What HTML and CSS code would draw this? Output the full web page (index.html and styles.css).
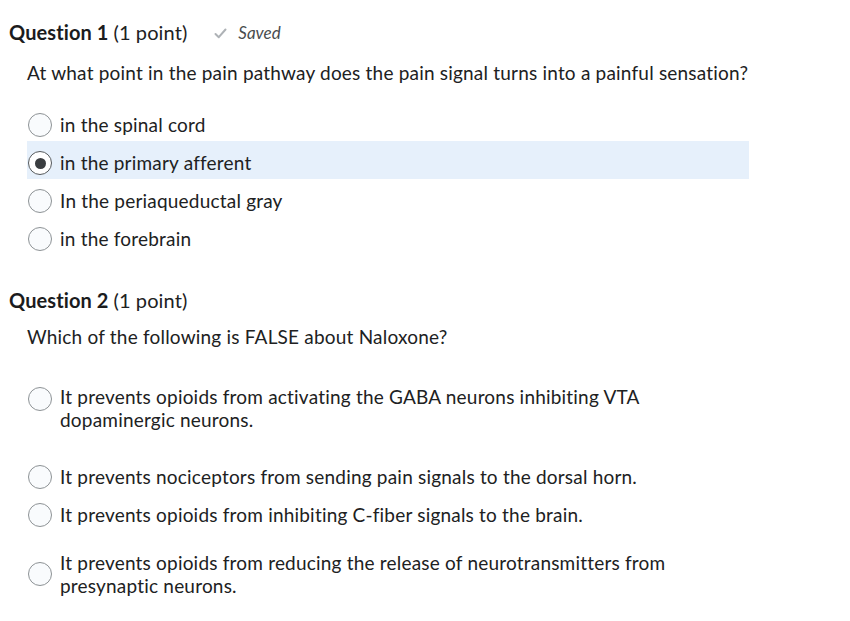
FILE: index.html
```html
<!DOCTYPE html>
<html lang="en">
<head>
    <meta charset="UTF-8">
    <meta name="viewport" content="width=device-width, initial-scale=1.0">
    <link rel="stylesheet" href="styles.css">
</head>
<body>

<div class="quiz">
    <div class="question">
        <div class="question-header">
            <h2 class="question-title">Question 1 <span class="points">(1 point)</span></h2>
            <div class="saved-status">
                <svg class="saved-icon" width="13" height="11" viewBox="0 0 13 11">
                    <path d="M1.5 6 L4.8 9.2 L11.5 1.5" fill="none" stroke="#aeb2b6" stroke-width="2" stroke-linecap="round" stroke-linejoin="round"/>
                </svg>
                <span>Saved</span>
            </div>
        </div>
        <p class="question-text">At what point in the pain pathway does the pain signal turns into a painful sensation?</p>
        <div class="options">
            <label class="option"><span class="radio"></span><span class="option-text">in the spinal cord</span></label>
            <label class="option selected"><span class="radio checked"></span><span class="option-text">in the primary afferent</span></label>
            <label class="option"><span class="radio"></span><span class="option-text">In the periaqueductal gray</span></label>
            <label class="option"><span class="radio"></span><span class="option-text">in the forebrain</span></label>
        </div>
    </div>

    <div class="question">
        <div class="question-header">
            <h2 class="question-title">Question 2 <span class="points">(1 point)</span></h2>
        </div>
        <p class="question-text question-text-tight">Which of the following is FALSE about Naloxone?</p>
        <div class="options options-spaced">
            <label class="option option-long option-spaced"><span class="radio"></span><span class="option-text">It prevents opioids from activating the GABA neurons inhibiting VTA<br>dopaminergic neurons.</span></label>
            <label class="option"><span class="radio"></span><span class="option-text">It prevents nociceptors from sending pain signals to the dorsal horn.</span></label>
            <label class="option"><span class="radio"></span><span class="option-text">It prevents opioids from inhibiting C-fiber signals to the brain.</span></label>
            <label class="option option-long option-centered"><span class="radio"></span><span class="option-text">It prevents opioids from reducing the release of neurotransmitters from<br>presynaptic neurons.</span></label>
        </div>
    </div>
</div>

</body>
</html>
```

FILE: styles.css
```css
body {
    margin: 0;
    background: #ffffff;
    color: #202122;
    font-family: Lato, "Noto Sans", sans-serif;
    font-size: 19px;
    line-height: 23px;
    letter-spacing: 0.2px;
    font-variant-ligatures: none;
}

.quiz {
    padding: 21px 0 0 9px;
}

.question + .question {
    margin-top: 34px;
}

.question-header {
    display: flex;
    align-items: center;
    gap: 27px;
}

.question-title {
    margin: 0;
    font-size: 20px;
    font-weight: 700;
    line-height: 23px;
    letter-spacing: 0.1px;
    color: #1b1c1d;
}

.points {
    font-weight: 400;
    color: #202122;
}

.saved-status {
    display: flex;
    align-items: center;
    gap: 11px;
    color: #494c4e;
    font-size: 17px;
    font-style: italic;
    letter-spacing: 0;
}

.saved-icon {
    margin-top: 1px;
}

.question-text {
    margin: 17px 0 0 18px;
}

.question-text-tight {
    margin-top: 13.4px;
}

.options {
    margin: 18.5px 0 0 18px;
    width: 722px;
}

.options-spaced {
    margin-top: 27px;
}

.option {
    display: flex;
    align-items: flex-start;
    gap: 8px;
    padding: 10.5px 0 4.5px 1px;
    cursor: pointer;
}

.option.selected {
    background: #e6f0fb;
}

.option-long + .option-long,
.option + .option-long {
    margin-top: 10px;
}

.option-spaced {
    margin-bottom: 19px;
}

.option-centered {
    align-items: center;
}

.radio {
    flex: none;
    box-sizing: border-box;
    width: 24px;
    height: 24px;
    margin: 0 0 -1px;
    border: 1px solid #8d9295;
    border-radius: 50%;
    background: #f9fbfd;
    display: flex;
    align-items: center;
    justify-content: center;
}

.option-long .radio {
    margin-top: 2px;
}

.option-centered .radio {
    margin: 0;
}

.radio.checked {
    border-color: #55595c;
    background: #ffffff;
}

.radio.checked::after {
    content: "";
    width: 11px;
    height: 11px;
    border-radius: 50%;
    background: #3a3d40;
}
```
